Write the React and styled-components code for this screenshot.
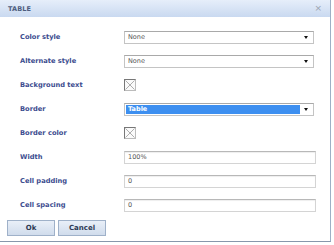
import React from "react";
import styled, { createGlobalStyle } from "styled-components";

const Global = createGlobalStyle`
  html, body { margin: 0; padding: 0; background: #fff; }
  body { font-family: "DejaVu Sans", Verdana, sans-serif; }
`;

const Dialog = styled.div`
  width: 330px;
  height: 241px;
  border-right: 1px solid #9db0c6;
  border-bottom: 1px solid #8797ab;
  background: #fff;
  display: flex;
  flex-direction: column;
`;

const Header = styled.div`
  height: 17px;
  background: linear-gradient(#e6eefa, #c9d9f0);
  display: flex;
  align-items: center;
  justify-content: space-between;
  padding: 0 8px 0 8px;
`;

const Title = styled.span`
  font-size: 6.5px;
  font-weight: bold;
  color: #4d5d80;
  letter-spacing: 0.1px;
`;

const Close = styled.span`
  font-size: 9px;
  color: #9aa3b0;
  line-height: 1;
`;

const Body = styled.div`
  padding: 8px 0 0 20px;
  display: grid;
  grid-template-columns: 104px 192px;
  grid-auto-rows: 24px;
  align-items: center;
`;

const Label = styled.div`
  font-size: 6.7px;
  font-weight: bold;
  color: #3d4d8f;
  white-space: nowrap;
`;

const SelectBox = styled.div`
  width: 190px;
  height: 13px;
  box-sizing: border-box;
  border: 1px solid #c4c4c4;
  border-top-color: #a9a9a9;
  background: #fff;
  display: flex;
  align-items: stretch;
  padding: 1px;
`;

const SelectText = styled.div`
  flex: 1;
  font-size: 6.5px;
  color: ${(p) => (p.$active ? "#fff" : "#555")};
  background: ${(p) => (p.$active ? "#3d8ff0" : "transparent")};
  display: flex;
  align-items: center;
  padding-left: 2px;
  font-weight: ${(p) => (p.$active ? "bold" : "normal")};
`;

const Arrow = styled.div`
  width: 12px;
  display: flex;
  align-items: center;
  justify-content: center;
  &::after {
    content: "";
    border-left: 2.5px solid transparent;
    border-right: 2.5px solid transparent;
    border-top: 3px solid #111;
  }
`;

const TextInput = styled.div`
  width: 192px;
  height: 13px;
  box-sizing: border-box;
  border: 1px solid #d4d4d4;
  border-top-color: #b8b8b8;
  box-shadow: inset 0 1px 1px #eee;
  font-size: 6.5px;
  color: #555;
  display: flex;
  align-items: center;
  padding-left: 3px;
`;

const Check = styled.div`
  width: 12px;
  height: 12px;
  box-sizing: border-box;
  border: 1px solid #777;
  border-right-color: #bbb;
  border-bottom-color: #bbb;
  background: #fafafa;
  display: flex;
  svg { display: block; }
`;

const Buttons = styled.div`
  display: flex;
  gap: 3px;
  padding: 3px 0 0 7px;
`;

const Button = styled.div`
  width: 48px;
  height: 16px;
  box-sizing: border-box;
  border: 1px solid #9fb1c9;
  background: linear-gradient(#e9eff8, #d0dcec);
  font-size: 7px;
  font-weight: bold;
  color: #2e3a55;
  display: flex;
  align-items: center;
  justify-content: center;
`;

const Select = ({ value, active }) => (
  <SelectBox>
    <SelectText $active={active}>{value}</SelectText>
    <Arrow />
  </SelectBox>
);

const Checkbox = () => (
  <Check>
    <svg width="10" height="10" viewBox="0 0 10 10">
      <path d="M0.5 0.5 L9.5 9.5 M9.5 0.5 L0.5 9.5" stroke="#9a9a9a" strokeWidth="0.8" />
    </svg>
  </Check>
);

export default function App() {
  return (
    <>
      <Global />
      <Dialog>
        <Header>
          <Title>TABLE</Title>
          <Close>×</Close>
        </Header>
        <Body>
          <Label>Color style</Label>
          <Select value="None" />
          <Label>Alternate style</Label>
          <Select value="None" />
          <Label>Background text</Label>
          <Checkbox />
          <Label>Border</Label>
          <Select value="Table" active />
          <Label>Border color</Label>
          <Checkbox />
          <Label>Width</Label>
          <TextInput>100%</TextInput>
          <Label>Cell padding</Label>
          <TextInput>0</TextInput>
          <Label>Cell spacing</Label>
          <TextInput>0</TextInput>
        </Body>
        <Buttons>
          <Button>Ok</Button>
          <Button>Cancel</Button>
        </Buttons>
      </Dialog>
    </>
  );
}
